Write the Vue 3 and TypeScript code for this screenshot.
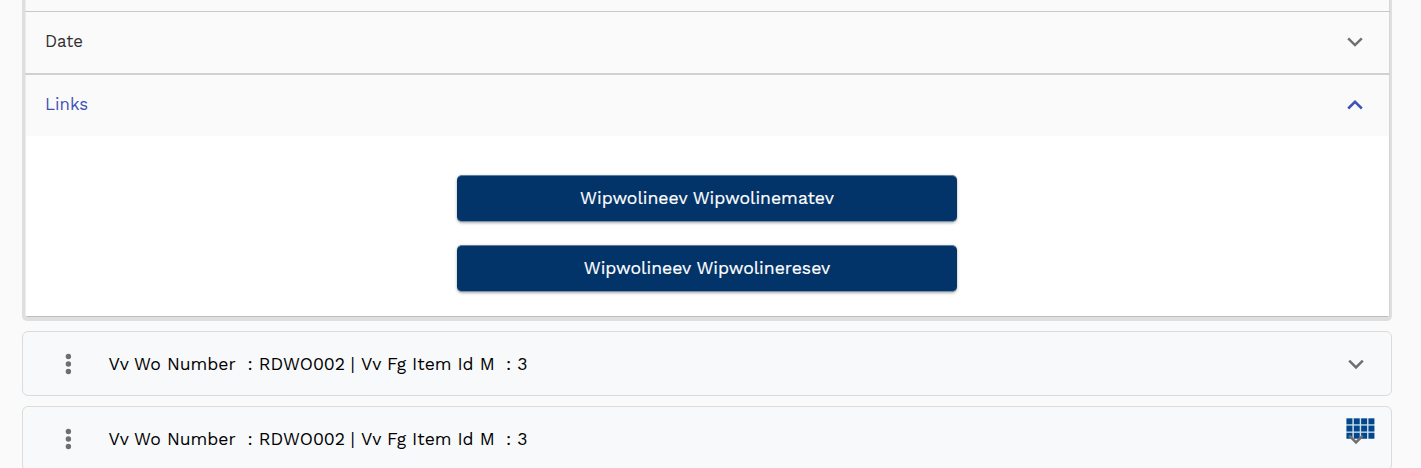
<script setup lang="ts">
const links: string[] = ['Wipwolineev Wipwolinematev', 'Wipwolineev Wipwolineresev']
const records = [
  { id: 1, order: 'RDWO002', item: '3' },
  { id: 2, order: 'RDWO002', item: '3' },
]
</script>

<template>
  <main class="page">
    <section class="panel">
      <div class="stub"></div>
      <header class="head date">
        <span class="date-label">Date</span>
        <svg class="chevron" width="24" height="24" viewBox="0 0 24 24"><path d="M5.2 9.4 12 16.1l6.8-6.7" /></svg>
      </header>
      <header class="head active">
        <span class="links-label">Links</span>
        <svg class="chevron" width="24" height="24" viewBox="0 0 24 24"><path d="M5.2 16.5 12 9.8l6.8 6.7" /></svg>
      </header>
      <div class="body">
        <button v-for="link in links" :key="link" class="link">{{ link }}</button>
      </div>
    </section>
    <section v-for="r in records" :key="r.id" class="record">
      <svg class="dots" width="8" height="24" viewBox="0 0 8 24">
        <circle cx="4.4" cy="4.5" r="2.7" /><circle cx="4.4" cy="12" r="2.7" /><circle cx="4.4" cy="19.5" r="2.7" />
      </svg>
      <div class="title">
        <span class="name">Vv Wo Number</span>
        <span class="order">: {{ r.order }}</span>
        <span class="bar">|</span>
        <span class="item">Vv Fg Item Id M</span>
        <span class="value">: {{ r.item }}</span>
      </div>
      <svg class="chevron" width="24" height="24" viewBox="0 0 24 24"><path d="M5.2 8.7 12 15.4l6.8-6.7" /></svg>
    </section>
    <svg class="apps" width="29" height="21" viewBox="0 0 29 21">
      <rect width="28.5" height="21" class="apps-gap" />
      <template v-for="row in 3" :key="row">
        <rect v-for="col in 4" :key="col" :x="(col - 1) * 7.33 + 0.5" :y="(row - 1) * 7.2 + 0.4" width="5.9" height="5.9" />
      </template>
    </svg>
  </main>
</template>

<style>
body {
  margin: 0;
  overflow: hidden;
  background: #fafafa;
}
</style>

<style scoped>
.page {
  position: relative;
  box-sizing: border-box;
  width: 1421px;
  height: 468px;
  padding: 0 29px 0 22px;
  overflow: hidden;
  background: #fafafa;
  font-family: "Work Sans", Inter, "Noto Sans", sans-serif;
  font-weight: 400;
  color: #000;
}
.panel {
  box-sizing: border-box;
  height: 321px;
  border: 3px solid #dedfe0;
  border-top: 0;
  border-right-width: 2px;
  border-bottom-width: 4px;
  border-radius: 0 0 5px 5px;
  box-shadow: inset 1px 0 #ececec, inset -1px 0 #d6d6d6, inset 0 -1px #bdbdbd;
}
.stub {
  height: 11px;
}
.head {
  box-sizing: border-box;
  display: flex;
  align-items: center;
  justify-content: space-between;
  padding: 0 23px 3px 20px;
  font-size: 16.8px;
  line-height: 24px;
}
.date {
  height: 62px;
  border-top: 1px solid #c8c8c8;
  color: #303030;
}
.active {
  height: 63px;
  border-top: 2px solid #d1d1d1;
  color: #3f51b5;
}
.chevron {
  flex: none;
  fill: none;
  stroke: #707070;
  stroke-width: 2.5;
}
.active .chevron {
  stroke: #3f51b5;
}
.body {
  box-sizing: border-box;
  display: flex;
  flex-direction: column;
  align-items: center;
  gap: 24px;
  height: 180px;
  margin: 0 1px;
  padding: 39px 2px 0 0;
  background: #fff;
}
.link {
  box-sizing: border-box;
  width: 500px;
  height: 47px;
  margin-bottom: -1px;
  padding: 0 0 0 1px;
  border: 0;
  border-top: 1px solid #5c7f9c;
  border-bottom: 1px solid #7c90a8;
  border-radius: 5px;
  background: #033469;
  box-shadow: 0 1px 3px rgba(0, 0, 0, 0.35);
  color: #fff;
  font: 400 17.6px/43px "Work Sans", Inter, "Noto Sans", sans-serif;
  -webkit-text-stroke: 0.2px #fff;
}
.record {
  box-sizing: border-box;
  display: flex;
  align-items: center;
  height: 65px;
  margin-top: 10px;
  padding: 0 23px 0 41px;
  border: 1px solid #d9dbdd;
  border-radius: 6px;
  background: #f8f9fb;
}
.record .chevron {
  position: relative;
  z-index: 2;
}
.dots {
  flex: none;
  fill: #6e6f71;
}
.title {
  display: flex;
  flex: 1;
  margin-left: 36.5px;
  font-size: 17.6px;
  line-height: 24px;
  white-space: pre;
}
.name {
  width: 139px;
}
.order {
  width: 103px;
}
.bar {
  width: 10.5px;
}
.item {
  width: 145px;
}
.apps {
  position: absolute;
  z-index: 1;
  top: 418px;
  left: 1346px;
  fill: #01478d;
}
.apps-gap {
  fill: #d5e0ea;
}
</style>
